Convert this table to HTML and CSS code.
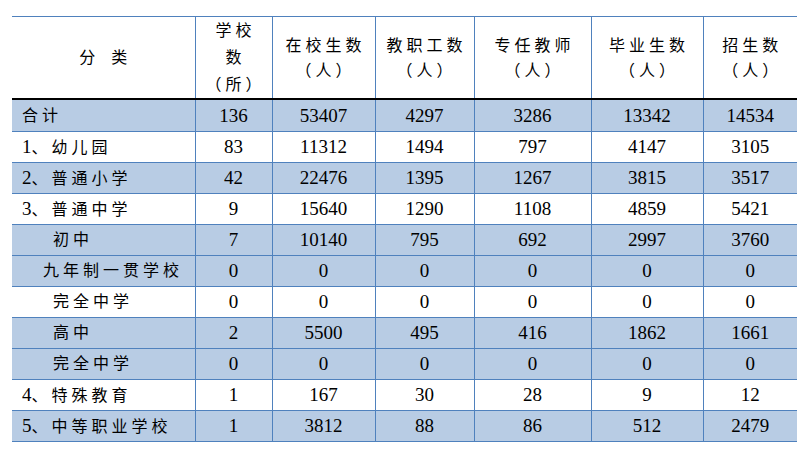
FILE: index.html
```html
<!DOCTYPE html>
<html lang="zh-CN">
<head>
<meta charset="utf-8">
<title>学校统计</title>
<link rel="stylesheet" href="styles.css">
</head>
<body>
<table class="stats">
  <colgroup>
    <col class="c1"><col class="c2"><col class="c3"><col class="c4"><col class="c5"><col class="c6"><col class="c7">
  </colgroup>
  <thead>
    <tr class="head">
      <th class="cat">分　类</th>
      <th class="three">学校<br>数<br>（所）</th>
      <th>在校生数<br>（人）</th>
      <th>教职工数<br>（人）</th>
      <th>专任教师<br>（人）</th>
      <th>毕业生数<br>（人）</th>
      <th>招生数<br>（人）</th>
    </tr>
  </thead>
  <tbody>
    <tr class="total shade"><td class="lbl">合计</td><td>136</td><td>53407</td><td>4297</td><td>3286</td><td>13342</td><td>14534</td></tr>
    <tr><td class="lbl"><span class="num">1</span>、幼儿园</td><td>83</td><td>11312</td><td>1494</td><td>797</td><td>4147</td><td>3105</td></tr>
    <tr class="shade"><td class="lbl"><span class="num">2</span>、普通小学</td><td>42</td><td>22476</td><td>1395</td><td>1267</td><td>3815</td><td>3517</td></tr>
    <tr><td class="lbl"><span class="num">3</span>、普通中学</td><td>9</td><td>15640</td><td>1290</td><td>1108</td><td>4859</td><td>5421</td></tr>
    <tr class="shade"><td class="lbl sub">初中</td><td>7</td><td>10140</td><td>795</td><td>692</td><td>2997</td><td>3760</td></tr>
    <tr class="shade"><td class="lbl sub2">九年制一贯学校</td><td>0</td><td>0</td><td>0</td><td>0</td><td>0</td><td>0</td></tr>
    <tr><td class="lbl sub">完全中学</td><td>0</td><td>0</td><td>0</td><td>0</td><td>0</td><td>0</td></tr>
    <tr class="shade"><td class="lbl sub">高中</td><td>2</td><td>5500</td><td>495</td><td>416</td><td>1862</td><td>1661</td></tr>
    <tr class="shade"><td class="lbl sub">完全中学</td><td>0</td><td>0</td><td>0</td><td>0</td><td>0</td><td>0</td></tr>
    <tr><td class="lbl"><span class="num">4</span>、特殊教育</td><td>1</td><td>167</td><td>30</td><td>28</td><td>9</td><td>12</td></tr>
    <tr class="shade"><td class="lbl"><span class="num">5</span>、中等职业学校</td><td>1</td><td>3812</td><td>88</td><td>86</td><td>512</td><td>2479</td></tr>
  </tbody>
</table>
</body>
</html>
```

FILE: styles.css
```css
html, body {
  margin: 0;
  background: #ffffff;
}
body {
  padding: 16px 0 0 12px;
  font-family: "Liberation Serif", "Noto Sans CJK SC", serif;
  color: #000000;
}
.stats {
  border-collapse: collapse;
  table-layout: fixed;
  width: 785px;
  border-top: 1px solid #4f81bd;
}
.c1 { width: 183px; }
.c2 { width: 77px; }
.c3 { width: 103px; }
.c4 { width: 99px; }
.c5 { width: 117px; }
.c6 { width: 112px; }
.c7 { width: 94px; }

.stats th,
.stats td {
  padding: 0;
  border-left: 1px solid #4f81bd;
  border-bottom: 1px solid #4f81bd;
  text-align: center;
  vertical-align: middle;
}
.stats th:first-child,
.stats td:first-child {
  border-left: none;
}
.head th {
  height: 78px;
  font-weight: normal;
  font-size: 16px;
  letter-spacing: 4px;
  line-height: 25px;
  border-bottom: 2px solid #000000;
  padding-left: 4px;
}
.head th.three {
  line-height: 27px;
}
.head th.cat {
  letter-spacing: 0;
  padding-left: 0;
}
.stats td {
  height: 30px;
  font-size: 19px;
  line-height: 22px;
}
.stats tr.total td {
  height: 31px;
}
.stats td.lbl {
  text-align: left;
  padding-left: 10px;
  font-size: 16px;
  letter-spacing: 4px;
}
.stats td.lbl .num {
  font-size: 19px;
  letter-spacing: 0;
}
.stats td.sub { padding-left: 41px; }
.stats td.sub2 { padding-left: 31px; }
.shade td {
  background: #b8cce4;
}
```
